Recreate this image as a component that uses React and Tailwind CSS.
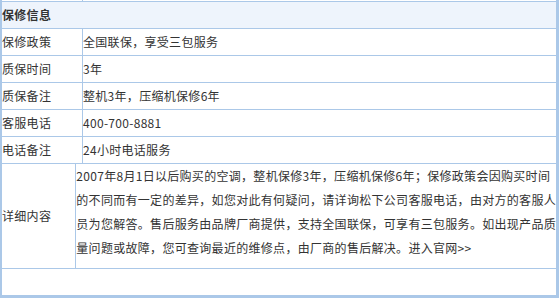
import React from "react";

const rows = [
  ["保修政策", "全国联保，享受三包服务"],
  ["质保时间", "3年"],
  ["质保备注", "整机3年，压缩机保修6年"],
  ["客服电话", "400-700-8881"],
  ["电话备注", "24小时电话服务"],
];

const detail = [
  "2007年8月1日以后购买的空调，整机保修3年，压缩机保修6年；保修政策会因购买时间",
  "的不同而有一定的差异，如您对此有何疑问，请详询松下公司客服电话，由对方的客服人",
  "员为您解答。售后服务由品牌厂商提供，支持全国联保，可享有三包服务。如出现产品质",
  "量问题或故障，您可查询最近的维修点，由厂商的售后解决。进入官网>>",
];

export default function App() {
  return (
    <div
      className="w-[559px] h-[298px] bg-white flex flex-col border-l-2 border-r-[3px] border-b-[3px] border-[#abc8e8] text-[12px] text-[#333] tracking-[0.3px] overflow-hidden"
      style={{ fontFamily: '"Noto Sans CJK SC", "Noto Sans", sans-serif' }}
    >
      <div className="h-px flex shrink-0">
        <div className="w-[81px] border-r border-[#abc8e8]" />
      </div>
      <div className="h-[27px] shrink-0 border-t border-[#abc8e8] bg-[#eef4fc] flex items-center font-bold">
        保修信息
      </div>
      {rows.map(([k, v]) => (
        <div key={k} className="h-[27px] shrink-0 border-t border-[#abc8e8] flex">
          <div className="w-[81px] border-r border-[#abc8e8] flex items-center whitespace-nowrap">{k}</div>
          <div className="flex-1 flex items-center whitespace-nowrap">{v}</div>
        </div>
      ))}
      <div className="h-[105px] shrink-0 border-t border-[#abc8e8] flex">
        <div className="w-[81px] border-r border-[#abc8e8] flex items-center whitespace-nowrap">详细内容</div>
        <div className="flex-1 flex flex-col justify-start leading-[24px] whitespace-nowrap">
          {detail.map((l, i) => (
            <div key={i}>{l}</div>
          ))}
        </div>
      </div>
      <div className="flex-1 border-t border-[#abc8e8]" />
    </div>
  );
}
